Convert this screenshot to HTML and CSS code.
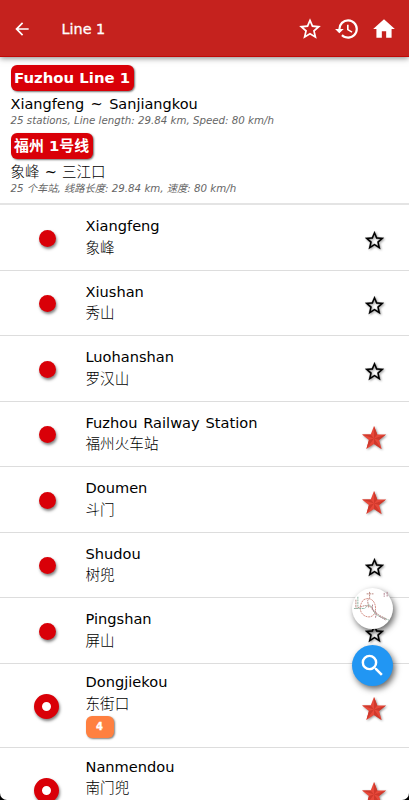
FILE: index.html
```html
<!DOCTYPE html>
<html lang="en">
  <head>
    <meta charset="utf-8" />
    <meta name="viewport" content="width=device-width, initial-scale=1.0" />
    <title>Line 1</title>
    <link rel="stylesheet" href="styles.css">
  </head>

  <body>
    <svg class="symbols" xmlns="http://www.w3.org/2000/svg">
      <symbol id="star" viewBox="0 0 24 24">
        <path d="M22 9.24l-7.19-.62L12 2 9.19 8.63 2 9.24l5.46 4.73L5.82 21 12 17.27 18.18 21l-1.63-7.03L22 9.24zM12 15.4l-3.76 2.27 1-4.28-3.32-2.88 4.38-.38L12 6.1l1.71 4.04 4.38.38-3.32 2.88 1 4.28L12 15.4z"/>
      </symbol>
      <symbol id="red-star" viewBox="0 0 24 24">
        <path fill="#e8483a" d="M12 0l3.3 8.4H24l-6.9 5.7L19.6 23 12 18 4.4 23l2.5-8.9L0 8.4h8.7z"/>
        <path fill="#cf392c" d="M12 0v12.4l3.3-4zM24 8.4l-12 4 5.1 1.7zM19.6 23L12 12.4V18zM4.4 23L12 12.4l-5.1 1.7zM0 8.4l12 4-3.3-4z"/>
      </symbol>
    </svg>

    <div class="screen">
      <header class="toolbar">
        <svg class="back" viewBox="0 0 24 24"><path d="M20 11H7.83l5.59-5.59L12 4l-8 8 8 8 1.41-1.41L7.83 13H20v-2z"/></svg>
        <h1>Line 1</h1>
        <nav>
          <svg viewBox="0 0 24 24"><use href="#star"/></svg>
          <svg viewBox="0 0 24 24"><path d="M13 3a9 9 0 0 0-9 9H1l3.89 3.89.07.14L9 12H6a7 7 0 1 1 7 7c-1.93 0-3.68-.79-4.94-2.06l-1.42 1.42A9 9 0 1 0 13 3zm-1 5v5l4.28 2.54.72-1.21-3.5-2.08V8H12z"/></svg>
          <svg viewBox="0 0 24 24"><path d="M10 20v-6h4v6h5v-8h3L12 3 2 12h3v8z"/></svg>
        </nav>
      </header>

      <section class="info">
        <h2>Fuzhou Line 1</h2>
        <p class="route">Xiangfeng ~ Sanjiangkou</p>
        <p class="details">25 stations, Line length: 29.84 km, Speed: 80 km/h</p>
        <h2>福州 1号线</h2>
        <p class="route tight"><span class="zh">象峰</span> ~ <span class="zh">三江口</span></p>
        <p class="details">25 个车站, 线路长度: 29.84 km, 速度: 80 km/h</p>
      </section>

      <ul class="stations">
        <li>
          <span class="dot"></span>
          <div class="name">Xiangfeng<span class="zh">象峰</span></div>
          <svg class="fav"><use href="#star"/></svg>
        </li>
        <li>
          <span class="dot"></span>
          <div class="name">Xiushan<span class="zh">秀山</span></div>
          <svg class="fav"><use href="#star"/></svg>
        </li>
        <li>
          <span class="dot"></span>
          <div class="name">Luohanshan<span class="zh">罗汉山</span></div>
          <svg class="fav"><use href="#star"/></svg>
        </li>
        <li>
          <span class="dot"></span>
          <div class="name">Fuzhou Railway Station<span class="zh">福州火车站</span></div>
          <svg class="fav red"><use href="#red-star"/></svg>
        </li>
        <li>
          <span class="dot"></span>
          <div class="name">Doumen<span class="zh">斗门</span></div>
          <svg class="fav red"><use href="#red-star"/></svg>
        </li>
        <li>
          <span class="dot"></span>
          <div class="name">Shudou<span class="zh">树兜</span></div>
          <svg class="fav"><use href="#star"/></svg>
        </li>
        <li>
          <span class="dot"></span>
          <div class="name">Pingshan<span class="zh">屏山</span></div>
          <svg class="fav"><use href="#star"/></svg>
        </li>
        <li class="transfer">
          <span class="dot"></span>
          <div class="name">Dongjiekou<span class="zh">东街口</span><b class="badge">4</b></div>
          <svg class="fav red"><use href="#red-star"/></svg>
        </li>
        <li class="transfer">
          <span class="dot"></span>
          <div class="name">Nanmendou<span class="zh">南门兜</span></div>
          <svg class="fav red"><use href="#red-star"/></svg>
        </li>
      </ul>

      <div class="floating">
        <button class="map" aria-label="Map">
          <svg viewBox="0 0 42 42" fill="none" stroke-width="1" stroke-dasharray="2 .7">
            <path stroke="#b98880" d="M4 12v9l6-2 3-1 6 1 3 5 6 4 8 4M18 4v6l-2 3 1 7M15 6h7"/>
            <path stroke="#d38f85" d="M12 12c8-4 13 3 12 11s-9 8-13 4-3-11 1-15z"/>
            <path stroke="#8fb5a4" d="M2 21h11l4-4 3 2 4 8 6 3 8 3M6 9v11"/>
            <path stroke="#b07f8e" d="M21 17v5l4 3-1 6M33 5v4M36 4v5M28 29l7 4"/>
          </svg>
        </button>
        <button class="search" aria-label="Search">
          <svg viewBox="0 0 24 24"><path d="M15.5 14h-.79l-.28-.27A6.471 6.471 0 0 0 16 9.5 6.5 6.5 0 1 0 9.5 16c1.61 0 3.09-.59 4.23-1.57l.27.28v.79l5 4.99L20.49 19l-4.99-5zm-6 0a4.5 4.5 0 1 1 0-9 4.5 4.5 0 0 1 0 9z"/></svg>
        </button>
      </div>
    </div>
  </body>
</html>
```

FILE: styles.css
```css
* {
  box-sizing: border-box;
}

body {
  margin: 0;
  background: #000;
  color: #000;
  font-family: "DejaVu Sans", "Noto Sans CJK SC", sans-serif;
}

h1, h2, p, ul {
  margin: 0;
  padding: 0;
}

.symbols {
  display: none;
}

.screen {
  position: relative;
  height: 800px;
  overflow: hidden;
  background: #fff;
  border-radius: 0 0 7px 7px;
}

.toolbar {
  display: flex;
  align-items: center;
  height: 57px;
  padding: 2px 12px 0;
  background: #c5221e;
  border-bottom: 1px solid #c00806;
  box-shadow: 0 1px 6px rgba(0, 0, 0, 0.5);
  color: #fff;
}

.toolbar svg {
  width: 26px;
  height: 26px;
  fill: #fff;
}

.toolbar .back {
  width: 20px;
  height: 20px;
}

.toolbar h1 {
  margin-left: 29.5px;
  font-size: 14.4px;
  font-weight: normal;
  -webkit-text-stroke: 0.3px #fff;
}

.toolbar nav {
  display: flex;
  gap: 11px;
  margin-left: auto;
}

/* line summary */
.info {
  height: 148px;
  padding: 8px 10.5px 0;
  border-bottom: 2px solid #e4e4e4;
}

.info h2 {
  width: max-content;
  height: 26px;
  padding: 0 3.5px;
  border-radius: 6px;
  background: #d90008;
  box-shadow: 1px 1px 2px rgba(0, 0, 0, 0.55);
  color: #fff;
  font-size: 14.9px;
  line-height: 26px;
}

.info .route {
  height: 23px;
  font-size: 14.5px;
  line-height: 26px;
  word-spacing: 1.8px;
}

.info .tight {
  word-spacing: 0.6px;
}

.info .details {
  height: 19px;
  color: #666;
  font-size: 10.25px;
  font-style: italic;
  line-height: 13px;
}

.zh {
  font-weight: 300;
}

/* stations */
.stations {
  list-style: none;
}

.stations li {
  display: flex;
  align-items: center;
  height: 65.5px;
  padding: 0 22px 0 34px;
  border-bottom: 1px solid #ddd;
}

.stations .transfer {
  height: 84.5px;
}

.dot {
  width: 17px;
  height: 17px;
  margin: 2px 30px 0 4.5px;
  border-radius: 50%;
  background: #d90008;
  box-shadow: 1px 2px 3px rgba(0, 0, 0, 0.5);
}

.transfer .dot {
  width: 25px;
  height: 25px;
  margin: 2px 26.5px 0 0;
  border: 8px solid #d90008;
  background: #fff;
}

.name {
  flex: 1;
  margin-bottom: 1px;
  font-size: 14.6px;
  line-height: 21.5px;
  word-spacing: 1.2px;
}

.transfer .name {
  height: 67px;
}

.name .zh {
  display: block;
}

.badge {
  display: block;
  width: 28px;
  height: 22px;
  margin-top: 2px;
  border-radius: 6px;
  background: #ff8040;
  box-shadow: 1px 1px 2px rgba(0, 0, 0, 0.5);
  color: #fff;
  font-size: 10px;
  font-weight: bold;
  line-height: 22px;
  text-align: center;
  -webkit-text-stroke: 0.3px #fff;
}

.fav {
  width: 23px;
  height: 23px;
  margin: 6px 1.5px 0 0;
  stroke: #000;
  stroke-width: 0.15px;
  filter: drop-shadow(1px 1px 1px rgba(0, 0, 0, 0.4));
}

.fav.red {
  width: 24px;
  height: 24px;
  margin: 8px 1px 0 0;
  stroke: none;
}

/* buttons over the list */
.floating {
  position: absolute;
  top: 588px;
  right: 16px;
  display: flex;
  flex-direction: column;
  gap: 16px;
}

.floating button {
  display: flex;
  align-items: center;
  justify-content: center;
  width: 41px;
  height: 41px;
  padding: 0;
  border: 0;
  border-radius: 50%;
  background: #fff;
  box-shadow: 2px 3px 6px rgba(0, 0, 0, 0.6);
}

.map svg {
  width: 41px;
  height: 41px;
}

.floating .search {
  background: #2196f3;
}

.search svg {
  width: 29px;
  height: 29px;
  fill: #fff;
}
```
